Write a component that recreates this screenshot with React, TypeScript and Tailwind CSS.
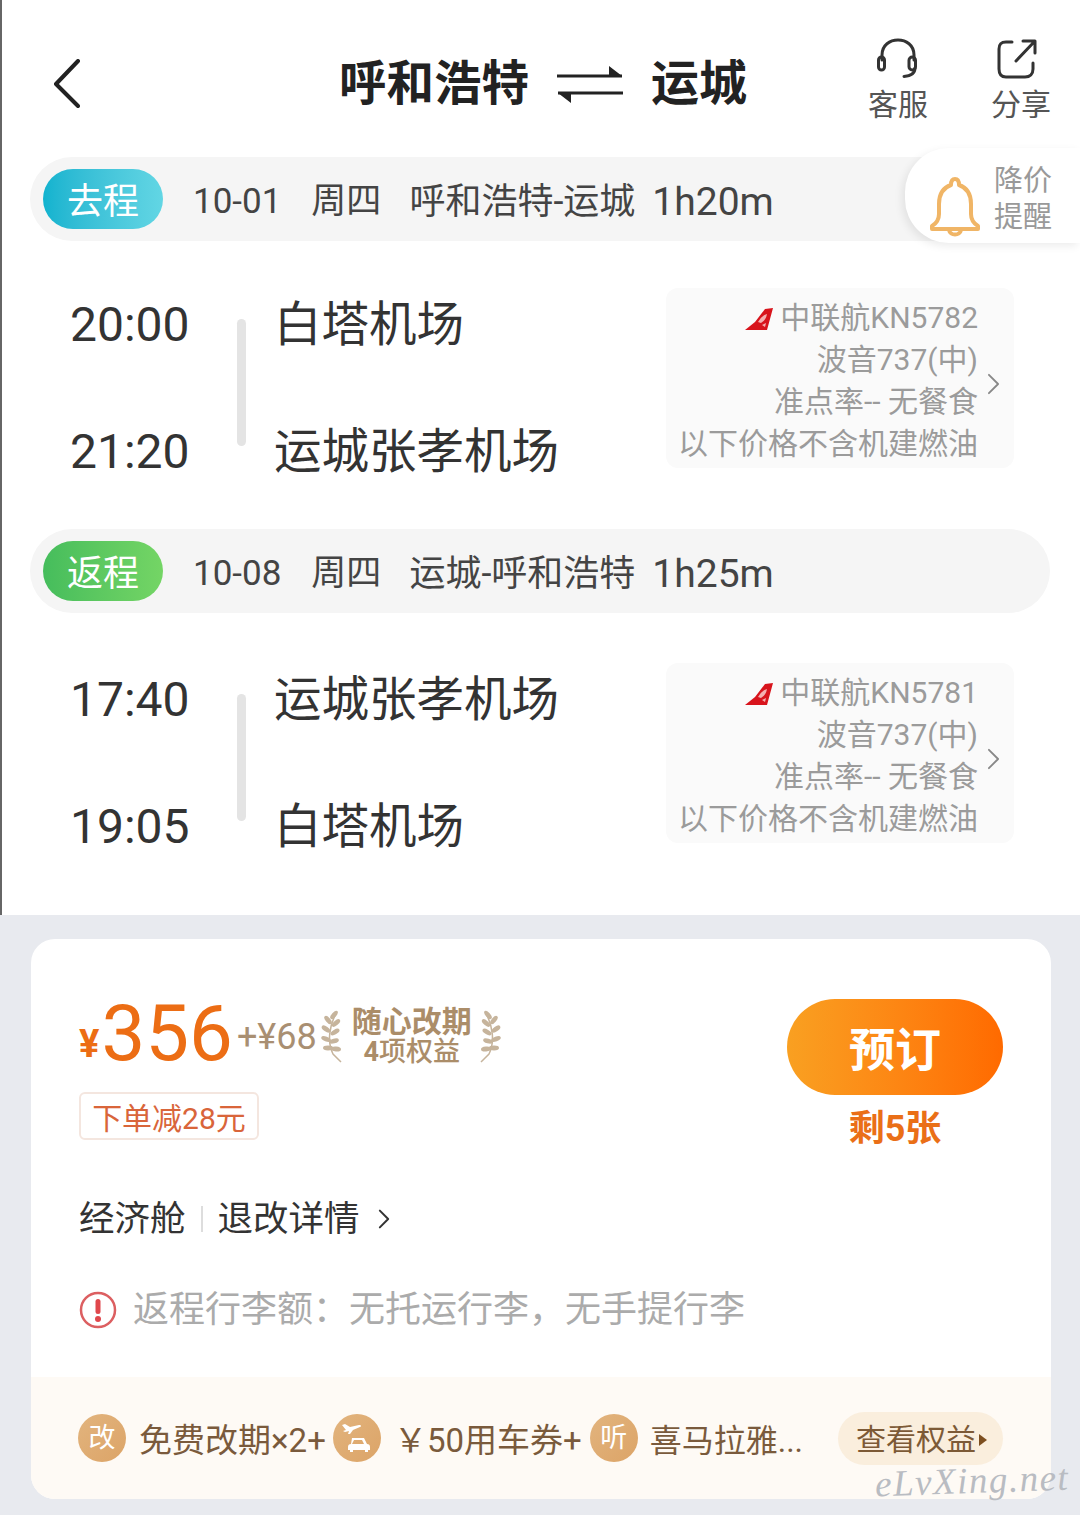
import React from "react";

function Tail() {
  return (
    <svg width="30" height="24" viewBox="0 0 30 24" className="inline-block mr-[6px] mb-[2px] align-middle">
      <path d="M1 23 L11 15 L21 2 L29 1 L23 23 Z" fill="#d8141c" />
      <path d="M14 15 q4-7 9-8 q-1 6-6 9 z M18 18 l4-2 -1 4z" fill="#f3b0b0" />
    </svg>
  );
}

function Chevron({ className = "", color = "#888", sw = 2 }: { className?: string; color?: string; sw?: number }) {
  return (
    <svg viewBox="0 0 14 24" className={className} fill="none">
      <path d="M2 2 L12 12 L2 22" stroke={color} strokeWidth={sw} strokeLinecap="round" strokeLinejoin="round" />
    </svg>
  );
}

function Laurel({ flip = false }: { flip?: boolean }) {
  const leaves = [
    [15, 7, -40], [9, 12, 30], [17, 15, -30], [7, 21, 15], [16, 24, -20], [7, 31, 0], [15, 33, -5], [9, 40, -20], [17, 41, 15],
  ];
  return (
    <svg width="24" height="56" viewBox="0 0 24 56" className={flip ? "-scale-x-100" : ""}>
      <path d="M18 3 C10 18 8 34 14 46 L22 54" stroke="#c6b49c" strokeWidth="1.5" fill="none" />
      {leaves.map(([x, y, r], i) => (
        <ellipse key={i} cx={x} cy={y} rx="5" ry="2.4" fill="#c6b49c" transform={`rotate(${r + (x < 12 ? 20 : -10)} ${x} ${y})`} />
      ))}
    </svg>
  );
}

function TripBar({ label, pill, date, route, dur }: { label: string; pill: string; date: string; route: string; dur: string }) {
  return (
    <div className="mx-[30px] h-[84px] rounded-full bg-[#f5f5f5] flex items-center pl-[13px] text-[35px] text-[#444]">
      <div className={`w-[120px] h-[60px] rounded-full flex items-center justify-center text-white text-[36px] pt-[6px] ${pill}`}>{label}</div>
      <span className="ml-[30px] pt-[6px]">{date}</span>
      <span className="ml-[30px] pt-[6px]">周四</span>
      <span className="ml-[28px] pt-[6px] text-[36px]">{route}</span>
      <span className="ml-[17px] pt-[6px] text-[39px] leading-[48px]">{dur}</span>
    </div>
  );
}

function FlightRow({ t1, t2, a1, a2, flight, mt }: { t1: string; t2: string; a1: string; a2: string; flight: string; mt: string }) {
  return (
    <div className={`flex items-start pl-[70px] pr-[66px] ${mt}`}>
      <div className="w-[167px] pt-[1px] text-[48px] leading-[72px] text-[#333]">
        <div>{t1}</div>
        <div className="mt-[55px]">{t2}</div>
      </div>
      <div className="w-[9px] h-[127px] mt-[31px] bg-[#e4e4e4] rounded-full" />
      <div className="ml-[28px] pt-[1px] text-[47.5px] leading-[72px] text-[#333]">
        <div>{a1}</div>
        <div className="mt-[55px]">{a2}</div>
      </div>
      <div className="ml-auto relative w-[348px] h-[180px] bg-[#fafafa] rounded-[12px] pt-[8.5px] pr-[36px] text-right text-[30px] leading-[42px] text-[#9b9b9b] whitespace-nowrap">
        <div><Tail />中联航{flight}</div>
        <div>波音737(中)</div>
        <div>准点率-- 无餐食</div>
        <div>以下价格不含机建燃油</div>
        <Chevron className="absolute right-[14px] top-[85px] w-[13px] h-[22px]" color="#888" />
      </div>
    </div>
  );
}

function Coin({ children }: { children: React.ReactNode }) {
  return (
    <div className="w-[48px] h-[48px] rounded-full bg-gradient-to-br from-[#e2b47e] to-[#dca467] flex items-center justify-center text-white text-[27px] shrink-0">
      {children}
    </div>
  );
}

export default function App() {
  return (
    <div className="w-[1080px] h-[1515px] bg-[#e8eaef] overflow-hidden relative font-['Roboto','Noto_Sans_CJK_SC',sans-serif]">
      <div className="h-[915px] bg-white shadow-[inset_2px_0_0_#666]">
        <header className="h-[157px] flex items-start">
          <svg viewBox="0 0 28 50" className="w-[28px] h-[50px] ml-[53px] mt-[59px]" fill="none">
            <path d="M25 2 L3 25 L25 47" stroke="#222" strokeWidth="4" strokeLinecap="round" strokeLinejoin="round" />
          </svg>
          <div className="ml-[258px] mt-[54px] flex items-center text-[47.5px] leading-[60px] font-bold text-[#222]">
            <span>呼和浩特</span>
            <svg viewBox="0 0 70 40" className="w-[70px] h-[40px] ml-[26px] mr-[26px]" fill="none">
              <path d="M2 12 H67 L54 2 V12" fill="#222" />
              <path d="M2 12 H67" stroke="#222" strokeWidth="3" />
              <path d="M68 29 H3 L16 39 V29" fill="#222" />
              <path d="M68 29 H3" stroke="#222" strokeWidth="3" />
            </svg>
            <span className="text-[48px]">运城</span>
          </div>
          <div className="ml-auto mr-[29px] mt-[38px] flex gap-[63px] text-[30px] leading-[40px] text-[#555]">
            <div className="flex flex-col items-center">
              <svg viewBox="0 0 44 44" className="w-[44px] h-[44px]" fill="none" stroke="#333" strokeWidth="3" strokeLinecap="round">
                <path d="M6 22 V17 C6 7 14 2 22 2 C30 2 38 7 38 17 V22" />
                <rect x="2.5" y="19" width="6" height="13" rx="3" />
                <rect x="33" y="19" width="6.5" height="13" rx="3.2" />
                <path d="M39 30 C39 36 34 38 28 38.5" />
              </svg>
              <span className="mt-[3px]">客服</span>
            </div>
            <div className="flex flex-col items-center">
              <svg viewBox="0 0 44 44" className="w-[44px] h-[44px] mr-[8px]" fill="none" stroke="#333" strokeWidth="3" strokeLinecap="round" strokeLinejoin="round">
                <path d="M17 4 H11 C6 4 4 6 4 11 V31 C4 36 6 39 11 39 H30 C35 39 38 36 38 31 V25" />
                <path d="M21 23 L39 4 M28 3 H40 V15" />
              </svg>
              <span className="mt-[3px]">分享</span>
            </div>
          </div>
        </header>

        <TripBar label="去程" pill="bg-gradient-to-r from-[#10b3cf] to-[#62d6e4]" date="10-01" route="呼和浩特-运城" dur="1h20m" />
        <FlightRow t1="20:00" t2="21:20" a1="白塔机场" a2="运城张孝机场" flight="KN5782" mt="mt-[47px]" />
        <div className="h-[41px]" />
        <TripBar label="返程" pill="bg-gradient-to-r from-[#45bd5c] to-[#74d565]" date="10-08" route="运城-呼和浩特" dur="1h25m" />
        <FlightRow t1="17:40" t2="19:05" a1="运城张孝机场" a2="白塔机场" flight="KN5781" mt="mt-[50px]" />
      </div>

      <div className="absolute left-[905px] top-[148px] w-[175px] h-[95px] bg-white rounded-l-[44px] shadow-[-3px_3px_8px_rgba(0,0,0,0.08)] flex items-center">
        <svg viewBox="0 0 52 62" className="w-[52px] h-[62px] ml-[24px] mt-[22px]" fill="none" stroke="#f0b566" strokeWidth="4" strokeLinejoin="round" strokeLinecap="round">
          <path d="M26 3 C23 3 22 6 22 9 C13 12 10 19 10 28 V38 C10 43 8 47 3 50 V53 H49 V50 C44 47 42 43 42 38 V28 C42 19 39 12 30 9 C30 6 29 3 26 3 Z" />
          <path d="M20 54 C21 60 31 60 32 54" />
        </svg>
        <div className="ml-[13px] mt-[6px] text-[29px] leading-[36px] text-[#999] w-[60px]">降价<br />提醒</div>
      </div>

      <div className="ml-[31px] mr-[29px] mt-[24px] h-[560px] bg-white rounded-[24px] overflow-hidden flex flex-col relative">
        <div className="flex-1 pl-[48px] pr-[48px] pt-[52px] relative">
          <div className="flex items-start">
            <div>
              <div className="flex items-center h-[90px]">
                <span className="text-[38px] font-bold text-[#ec6d14] mt-[16px]">¥</span>
                <span className="text-[78px] leading-[90px] text-[#ec6d14] ml-[2px] mt-[-4px]">356</span>
                <span className="text-[36px] text-[#a98f72] ml-[4px] mt-[2px]">+¥68</span>
                <div className="ml-[2px] flex items-center">
                  <Laurel />
                  <div className="ml-[9px] mr-[7px] text-center text-[#ab8d69]">
                    <div className="text-[30px] leading-[32px] font-bold whitespace-nowrap">随心改期</div>
                    <div className="text-[27px] leading-[28px] font-medium whitespace-nowrap"><span className="font-bold">4</span>项权益</div>
                  </div>
                  <Laurel flip />
                </div>
              </div>
              <div className="mt-[11px] w-[180px] h-[48px] border-[2px] border-[#f4e6df] rounded-[6px] flex items-center justify-center pt-[4px] text-[30px] text-[#d9653a] whitespace-nowrap">下单减28元</div>
            </div>
            <div className="ml-auto mt-[8px] flex flex-col items-center">
              <div className="w-[216px] h-[96px] rounded-full bg-gradient-to-r from-[#f9a021] to-[#ff6a00] flex items-center justify-center text-white text-[46px] font-bold pt-[6px]">预订</div>
              <div className="mt-[12px] text-[36px] leading-[44px] font-bold text-[#ea6f17]">剩5张</div>
            </div>
          </div>
          <div className="mt-[43px] flex items-center text-[35.5px] leading-[50px] text-[#333] whitespace-nowrap">
            <span>经济舱</span>
            <span className="w-[2px] h-[26px] bg-[#ddd] mx-[15px]" />
            <span>退改详情</span>
            <Chevron className="w-[12px] h-[20px] ml-[18px]" color="#333" sw={2.4} />
          </div>
          <div className="mt-[41px] flex items-center text-[36px] leading-[50px] text-[#ababab] whitespace-nowrap">
            <svg viewBox="0 0 38 38" className="w-[38px] h-[38px] mr-[16px]">
              <circle cx="19" cy="19" r="17" fill="none" stroke="#dc5f61" strokeWidth="2.5" />
              <rect x="16.5" y="8" width="5" height="15" rx="2.5" fill="#e0474c" />
              <circle cx="19" cy="28" r="3" fill="#e0474c" />
            </svg>
            <span>{"返程行李额\uFF1A无托运行李\uFF0C无手提行李"}</span>
          </div>
        </div>
        <div className="h-[122px] bg-[#fefaf5] flex items-center pl-[47px] pr-[48px] text-[33px] text-[#7a5a3c] whitespace-nowrap">
          <Coin>改</Coin>
          <span className="ml-[13px] pt-[6px]">免费改期×2+</span>
          <span className="ml-[7px]">
            <Coin>
              <svg viewBox="0 0 36 36" className="w-[36px] h-[36px]" fill="#fff">
                <path d="M3 5 l3-1 5 3 9-2 c2 0 3 1 1 2 l-7 3 -3 4 -2 0 1-3 -4 1 -2-1 3-1z" />
                <path d="M13 18 h12 l3 6 c2 0 3 1 3 3 v3 h-2 v2 h-3 v-2 h-12 v2 h-3 v-2 h-2 v-3 c0-2 1-3 3-3z M15 20 l-2 4 h12 l-2-4z" fillRule="evenodd" />
              </svg>
            </Coin>
          </span>
          <span className="ml-[13px] pt-[6px]">{"\uFFE550用车券+"}</span>
          <span className="ml-[8px]"><Coin>听</Coin></span>
          <span className="ml-[12px] pt-[6px] text-[32px]">喜马拉雅...</span>
          <div className="ml-auto w-[165px] h-[53px] rounded-full bg-[#faeedd] flex items-center pl-[18px] pt-[3px] text-[30px] text-[#7d5a36]">
            查看权益
            <svg viewBox="0 0 8 12" className="w-[8px] h-[12px] ml-[3px]"><path d="M0 0 L8 6 L0 12Z" fill="#7d4f20" /></svg>
          </div>
        </div>
      </div>

      <div className="absolute left-[875px] top-[1459px] rotate-[-2deg] text-[37px] leading-[44px] italic text-[#b9bcc2] tracking-[1.5px] font-['Liberation_Serif',serif]">eLvXing.net</div>
    </div>
  );
}
